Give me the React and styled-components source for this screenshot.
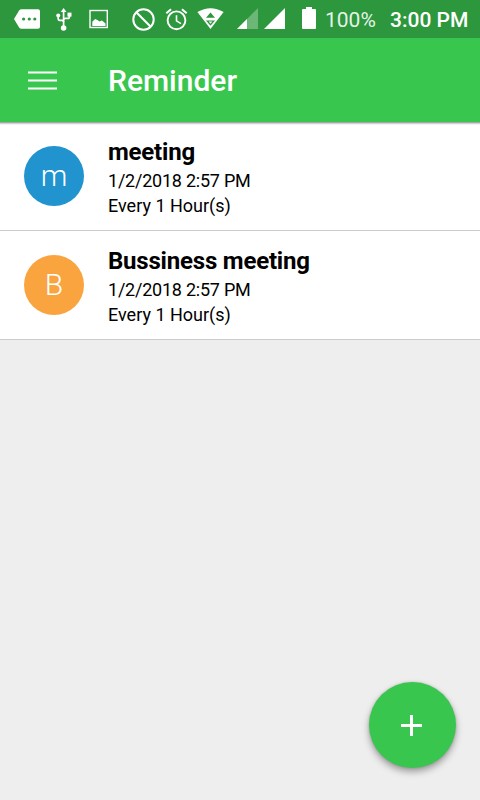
import React from "react";
import styled, { createGlobalStyle } from "styled-components";

const colors = {
    primary: "#39c64e",
    primaryDark: "#2d973d",
    background: "#eeeeee",
    divider: "#cccccc",
};

const GlobalStyle = createGlobalStyle`
    * {
        box-sizing: border-box;
    }

    body {
        margin: 0;
        background: ${colors.background};
        font-family: Roboto, "Liberation Sans", sans-serif;
    }
`;

const Screen = styled.div`
    position: relative;
    display: flex;
    flex-direction: column;
    width: 480px;
    height: 800px;
    overflow: hidden;
    background: ${colors.background};
`;

const StatusBar = styled.div`
    display: flex;
    align-items: center;
    flex: none;
    height: 38px;
    padding-left: 14px;
    color: #fff;
    background: ${colors.primaryDark};
`;

const StatusIcon = styled.svg`
    display: block;
    flex: none;
    height: 38px;
    margin-right: ${({ $gap }) => $gap}px;
`;

const BatteryText = styled.span`
    width: 65px;
    font-size: 21px;
    line-height: 38px;
    padding-top: 2px;
    color: rgba(255, 255, 255, 0.9);
    white-space: nowrap;
`;

const Clock = styled.span`
    font-size: 21px;
    font-weight: 500;
    line-height: 38px;
    padding-top: 2px;
    white-space: nowrap;
`;

const AppBar = styled.header`
    position: relative;
    z-index: 1;
    display: flex;
    align-items: center;
    flex: none;
    height: 84px;
    padding-left: 28px;
    background: ${colors.primary};
    box-shadow: 0 1px 0 #a5a5a5, 0 2px 0 #d2d2d2, 0 3px 0 #f1f1f1;
`;

const MenuButton = styled.button`
    display: block;
    width: 29px;
    height: 20px;
    margin: 0 51px 0 0;
    padding: 0;
    border: 0;
    background: none;

    svg {
        display: block;
    }
`;

const Title = styled.h1`
    margin: 0;
    padding-top: 1px;
    font-size: 30px;
    font-weight: 500;
    line-height: 40px;
    color: #fff;
`;

const ReminderList = styled.ul`
    margin: 0;
    padding: 0;
    list-style: none;
`;

const ReminderRow = styled.li`
    display: flex;
    height: 109px;
    padding: 0 24px;
    background: #fff;
    border-bottom: 1px solid ${colors.divider};

    .reminder__name {
        margin: 0 0 2px;
        font-size: 24px;
        font-weight: 700;
        line-height: 28px;
        letter-spacing: -0.2px;
        color: #000;
    }

    .reminder__detail {
        margin: 0;
        font-size: 18px;
        line-height: 25px;
        color: #000;
    }

    .reminder__detail--date {
        letter-spacing: -0.23px;
    }
`;

const Avatar = styled.div`
    flex: none;
    width: 60px;
    height: 60px;
    margin: 24px 24px 0 0;
    border-radius: 50%;
    font-size: 30px;
    font-weight: 300;
    line-height: 60px;
    text-align: center;
    color: #fff;
    background: ${({ $color }) => $color};
`;

const ReminderText = styled.div`
    padding-top: 16px;
    white-space: nowrap;
`;

const AddButton = styled.button`
    position: absolute;
    right: 24px;
    bottom: 32px;
    display: flex;
    align-items: center;
    justify-content: center;
    width: 87px;
    height: 86px;
    padding: 0 2px 0 0;
    border: 0;
    border-radius: 50%;
    background: ${colors.primary};
    box-shadow: 0 4px 7px rgba(0, 0, 0, 0.34), 0 0 3px rgba(0, 0, 0, 0.14);
`;

const MessageIcon = () => (
    <StatusIcon $gap={16} width="26" viewBox="14 0 26 38">
        <path
            d="M21.5 9.3H38a2 2 0 0 1 2 2v15.4a2 2 0 0 1-2 2H21.5a3 3 0 0 1-2.4-1.3L14 19l5.1-8.4a3 3 0 0 1 2.4-1.3z"
            fill="#fff"
        />
        <circle cx="23.6" cy="19" r="1.6" fill={colors.primaryDark} />
        <circle cx="29.3" cy="19" r="1.6" fill={colors.primaryDark} />
        <circle cx="34.8" cy="19" r="1.6" fill={colors.primaryDark} />
    </StatusIcon>
);

const UsbIcon = () => (
    <StatusIcon $gap={17} width="16" viewBox="56 0 16 38">
        <g fill="none" stroke="#fff" strokeWidth="1.7">
            <path d="M63.6 28V11" />
            <path d="M58.2 15v3.6q0 1.7 1.6 1.7h2.3q1.5 0 1.5 1.6" />
            <path d="M69.4 15v1.7q0 1.7-1.7 1.7h-2.6q-1.5 0-1.5 1.6" />
        </g>
        <path d="M63.6 8l2.9 4h-5.8z" fill="#fff" />
        <circle cx="58.2" cy="15.6" r="2" fill="#fff" />
        <rect x="67.5" y="12.6" width="4" height="4" fill="#fff" />
        <circle cx="63.6" cy="28" r="2.8" fill="#fff" />
    </StatusIcon>
);

const ImageIcon = () => (
    <StatusIcon $gap={24} width="19" viewBox="89 0 19 38">
        <rect x="90" y="10.5" width="17.3" height="17" fill="none" stroke="#fff" strokeWidth="1.4" />
        <path d="M92.3 26v-4.2l2.8-2.9 2.3 1 2.2 1.6 2.3-.9 1.9 1.3 1.7 1.6V26z" fill="#fff" />
    </StatusIcon>
);

const BlockedIcon = () => (
    <StatusIcon $gap={10} width="23" viewBox="132 0 23 38">
        <circle cx="143.5" cy="19.5" r="10.2" fill="none" stroke="#fff" strokeWidth="2" />
        <path d="M136.3 12.3l14.4 14.4" stroke="#fff" strokeWidth="2" />
    </StatusIcon>
);

const AlarmIcon = () => (
    <StatusIcon $gap={9} width="23" viewBox="165 0 23 38">
        <g fill="none" stroke="#fff" strokeWidth="1.9">
            <circle cx="176.5" cy="20.3" r="8.9" />
            <path d="M166.3 13.3l4.8-4M186.7 13.3l-4.8-4" strokeWidth="2.1" />
            <path d="M176.5 15.2v5.7l4.5 2.7" strokeWidth="1.6" />
        </g>
    </StatusIcon>
);

const WifiIcon = () => (
    <StatusIcon $gap={13} width="27" viewBox="197 0 27 38">
        <path d="M197.4 12.1q13.2-7.8 26.2 0L210.5 29z" fill="#fff" />
        <path d="M206 17.8l4.5-5.2 4.5 5.2z" fill={colors.primaryDark} />
        <path d="M206 20.4h9l-4.5 5.4z" fill={colors.primaryDark} />
        <path d="M208.7 21.6h3.6l-1.8 2.2z" fill="#fff" />
    </StatusIcon>
);

const WeakSignalIcon = () => (
    <StatusIcon $gap={6} width="21" viewBox="237 0 21 38">
        <path d="M237 29L258 8v21z" fill="#fff" fillOpacity="0.3" />
        <path d="M237 29l10-10v10z" fill="#fff" />
    </StatusIcon>
);

const SignalIcon = () => (
    <StatusIcon $gap={17} width="21" viewBox="264 0 21 38">
        <path d="M264 29L285 8v21z" fill="#fff" />
    </StatusIcon>
);

const BatteryIcon = () => (
    <StatusIcon $gap={9} width="14" viewBox="302 0 14 38">
        <path d="M306 7h6v2h3q1 0 1 1v18q0 1-1 1h-12q-1 0-1-1V10q0-1 1-1h3z" fill="#fff" />
    </StatusIcon>
);

const reminders = [
    { name: "meeting", date: "1/2/2018 2:57 PM", repeat: "Every 1 Hour(s)", initial: "m", color: "#2193cf" },
    { name: "Bussiness meeting", date: "1/2/2018 2:57 PM", repeat: "Every 1 Hour(s)", initial: "B", color: "#faa43f" },
];

const Reminder = ({ name, date, repeat, initial, color }) => {
    return (
        <ReminderRow>
            <Avatar $color={color}>{initial}</Avatar>
            <ReminderText>
                <p className="reminder__name">{name}</p>
                <p className="reminder__detail reminder__detail--date">{date}</p>
                <p className="reminder__detail">{repeat}</p>
            </ReminderText>
        </ReminderRow>
    );
};

const App = () => {
    return (
        <>
            <GlobalStyle />
            <Screen>
                <StatusBar>
                    <MessageIcon />
                    <UsbIcon />
                    <ImageIcon />
                    <BlockedIcon />
                    <AlarmIcon />
                    <WifiIcon />
                    <WeakSignalIcon />
                    <SignalIcon />
                    <BatteryIcon />
                    <BatteryText>100%</BatteryText>
                    <Clock>3:00 PM</Clock>
                </StatusBar>
                <AppBar>
                    <MenuButton aria-label="Menu">
                        <svg width="29" height="20" viewBox="0 0 29 20">
                            <path d="M0 2.5h29M0 10.5h29M0 18.5h29" stroke="#fff" strokeWidth="2" />
                        </svg>
                    </MenuButton>
                    <Title>Reminder</Title>
                </AppBar>
                <ReminderList>
                    {reminders.map((reminder) => (
                        <Reminder key={reminder.name} {...reminder} />
                    ))}
                </ReminderList>
                <AddButton aria-label="Add reminder">
                    <svg width="21" height="21" viewBox="0 0 21 21">
                        <path d="M10.5 0v21M0 10.5h21" stroke="#fff" strokeWidth="3" />
                    </svg>
                </AddButton>
            </Screen>
        </>
    );
};

export default App;
